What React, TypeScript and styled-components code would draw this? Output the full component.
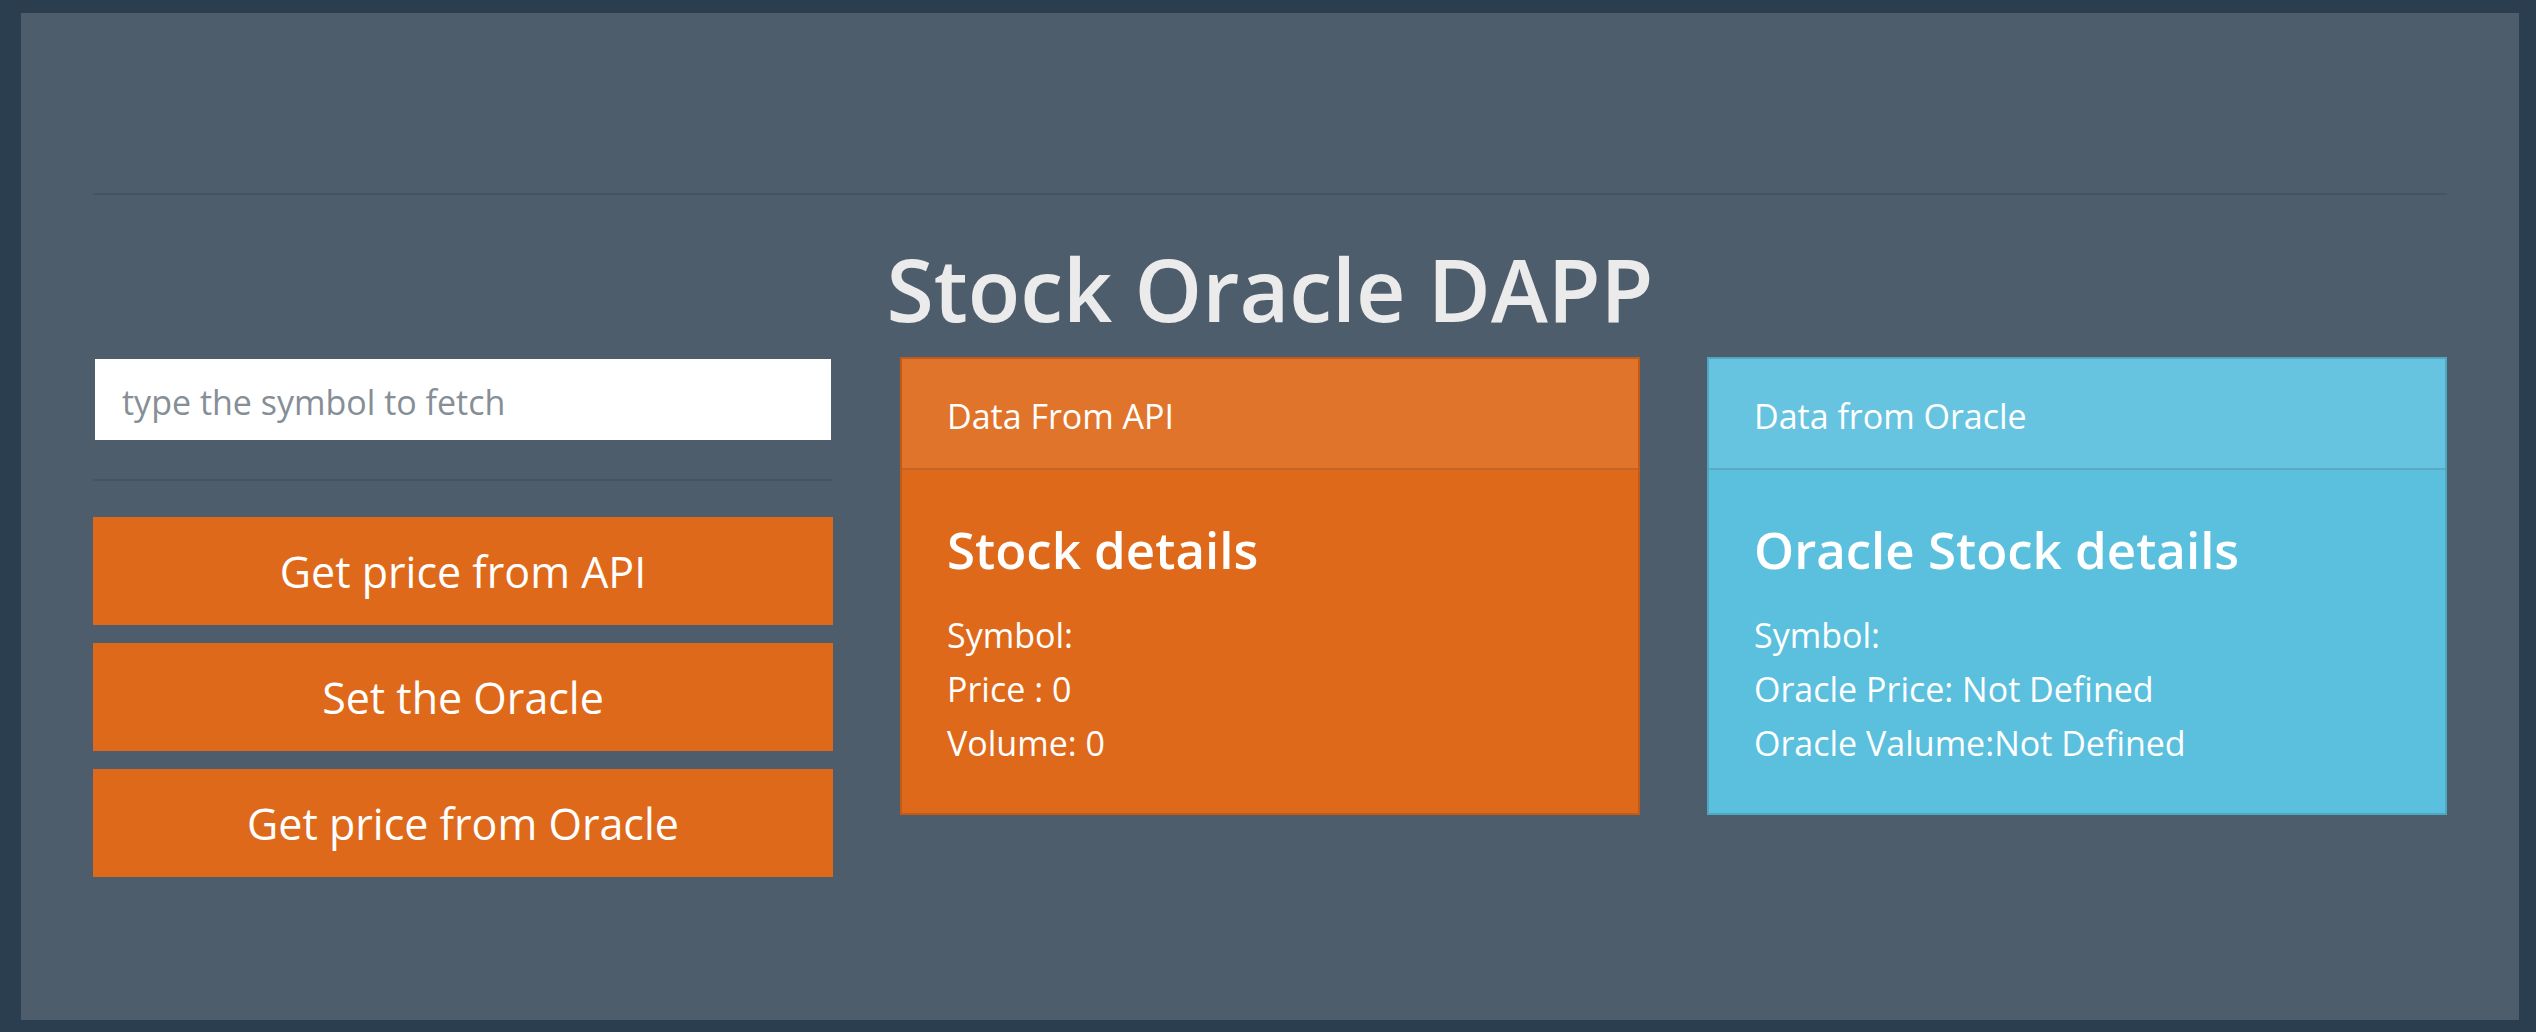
import React, { useState } from "react";
import styled, { createGlobalStyle } from "styled-components";

const GlobalStyle = createGlobalStyle`
  *, *::before, *::after { box-sizing: border-box; }
  body {
    margin: 0;
    background: #2b3e50;
    color: #ebebeb;
    font-family: "Segoe UI", "Open Sans", "Noto Sans", sans-serif;
    font-size: 34px;
    line-height: 54px;
  }
`;

const Page = styled.div`
  display: flex;
  min-height: 100vh;
  padding: 13px 17px 12px 21px;
`;

const Panel = styled.main`
  flex: 1;
  min-width: 0;
  padding: 143px 72px;
  background: #4e5d6c;
`;

const Divider = styled.hr`
  height: 2px;
  margin: 37px 0 36px;
  border: 0;
  background: rgba(0, 0, 0, 0.1);
`;

const Title = styled.h1`
  margin: 0 0 10px;
  font-size: 86px;
  font-weight: 600;
  line-height: 116px;
  text-align: center;
`;

const Columns = styled.div`
  display: grid;
  grid-template-columns: repeat(auto-fit, minmax(520px, 1fr));
  align-items: start;
  gap: 67px;
`;

const SymbolInput = styled.input`
  display: block;
  width: 100%;
  height: 85px;
  padding: 4px 27px 0;
  border: 2px solid transparent;
  border-radius: 0;
  background: #fff;
  background-clip: padding-box;
  color: #2b3e50;
  font: inherit;
  &::placeholder { color: #868e96; opacity: 1; }
`;

const Actions = styled.div`
  display: grid;
  gap: 18px;
`;

const ActionButton = styled.button`
  padding: 28px 36px 26px;
  border: 0;
  background: #df691a;
  color: #fff;
  font: inherit;
  font-size: 43px;
  cursor: pointer;
`;

const Card = styled.section<{ $color: string }>`
  border: 2px solid rgba(0, 0, 0, 0.125);
  background: ${(p) => p.$color};
  color: #fff;
`;

const CardHeader = styled.header`
  padding: 30px 45px 25px;
  border-bottom: 2px solid rgba(0, 0, 0, 0.125);
  background: rgba(255, 255, 255, 0.075);
`;

const CardBody = styled.div`
  padding: 47px 45px 43px;
`;

const CardTitle = styled.h2`
  margin: 0 0 26px;
  font-size: 51px;
  font-weight: 600;
  line-height: 65px;
`;

const Detail = styled.p`
  margin: 0;
`;

interface StockCardProps {
  color: string;
  header: string;
  title: string;
  details: string[];
}

function StockCard({ color, header, title, details }: StockCardProps) {
  return (
    <Card $color={color}>
      <CardHeader>{header}</CardHeader>
      <CardBody>
        <CardTitle>{title}</CardTitle>
        {details.map((line) => (
          <Detail key={line}>{line}</Detail>
        ))}
      </CardBody>
    </Card>
  );
}

export default function App() {
  const [symbol, setSymbol] = useState("");
  return (
    <>
      <GlobalStyle />
      <Page>
        <Panel>
          <Divider />
          <Title>Stock Oracle DAPP</Title>
          <Columns>
            <div>
              <SymbolInput
                type="text"
                aria-label="type the symbol to fetch"
                placeholder="type the symbol to fetch"
                value={symbol}
                onChange={(e) => setSymbol(e.target.value)}
              />
              <Divider />
              <Actions>
                <ActionButton type="button">Get price from API</ActionButton>
                <ActionButton type="button">Set the Oracle</ActionButton>
                <ActionButton type="button">Get price from Oracle</ActionButton>
              </Actions>
            </div>
            <StockCard
              color="#df691a"
              header="Data From API"
              title="Stock details"
              details={["Symbol:", "Price : 0", "Volume: 0"]}
            />
            <StockCard
              color="#5bc0de"
              header="Data from Oracle"
              title="Oracle Stock details"
              details={["Symbol:", "Oracle Price: Not Defined", "Oracle Valume:Not Defined"]}
            />
          </Columns>
        </Panel>
      </Page>
    </>
  );
}
